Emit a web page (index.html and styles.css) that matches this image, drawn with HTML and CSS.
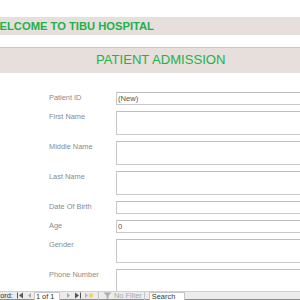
FILE: index.html
```html
<!DOCTYPE html>
<html>
<head>
<meta charset="utf-8">
<link rel="stylesheet" href="styles.css">
</head>
<body>
<div class="page">
  <div class="banner-top"><span class="welcome">WELCOME TO TIBU HOSPITAL</span></div>
  <div class="banner-title"><span class="title">PATIENT ADMISSION</span></div>
  <div class="form">
    <div class="row"><label>Patient ID</label><div class="box short">(New)</div></div>
    <div class="row"><label>First Name</label><div class="box tall"></div></div>
    <div class="row"><label>Middle Name</label><div class="box tall"></div></div>
    <div class="row"><label>Last Name</label><div class="box tall"></div></div>
    <div class="row"><label>Date Of Birth</label><div class="box short"></div></div>
    <div class="row"><label>Age</label><div class="box short">0</div></div>
    <div class="row"><label>Gender</label><div class="box tall"></div></div>
    <div class="row"><label>Phone Number</label><div class="box tall"></div></div>
  </div>
</div>
<div class="navbar">
  <span class="rec">Record:</span>
  <svg class="nav-ic" width="8" height="7" viewBox="0 0 8 7"><rect x="1" y="0.5" width="1" height="6" fill="#555"/><path d="M7 0.5 L3 3.5 L7 6.5 Z" fill="#555"/></svg>
  <svg class="nav-ic" width="6" height="7" viewBox="0 0 6 7"><path d="M5 1 L2 3.5 L5 6 Z" fill="#aaa"/></svg>
  <span class="pos">1 of 1</span>
  <svg class="nav-ic" width="7" height="7" viewBox="0 0 7 7"><path d="M2 1 L5 3.5 L2 6 Z" fill="#aaa"/></svg>
  <svg class="nav-ic" width="8" height="7" viewBox="0 0 8 7"><path d="M1 0.5 L5 3.5 L1 6.5 Z" fill="#555"/><rect x="6" y="0.5" width="1" height="6" fill="#555"/></svg>
  <svg class="nav-ic" width="10" height="7" viewBox="0 0 10 7"><path d="M1 0.5 L4 3.5 L1 6.5 Z" fill="#bbb"/><circle cx="7" cy="3.5" r="2.2" fill="#f2d36b"/></svg>
  <span class="sep"></span>
  <svg class="nav-ic" width="9" height="7" viewBox="0 0 9 7"><path d="M0.5 0.5 H8.5 L5.5 3.5 V6.5 H3.5 V3.5 Z" fill="#aaa"/></svg>
  <span class="nofilter">No Filter</span>
  <span class="sep"></span>
  <span class="search">Search</span>
</div>
</body>
</html>
```
FILE: styles.css
```css
html, body {
  margin: 0;
  padding: 0;
  background: #ffffff;
  overflow: hidden;
  width: 300px;
  height: 300px;
}
body {
  font-family: "Liberation Sans", Arial, sans-serif;
  position: relative;
}
.page {
  padding-top: 17px;
}
.banner-top {
  height: 18px;
  background: #e6dfdc;
  display: flex;
  align-items: center;
  overflow: hidden;
}
.welcome {
  margin-left: -11px;
  color: #20b24b;
  font-weight: bold;
  font-size: 11.2px;
  white-space: nowrap;
}
.banner-title {
  margin-top: 12px;
  height: 25px;
  border-top: 1px solid #cbc4c0;
  background: #e6dfdc;
  display: flex;
  align-items: center;
}
.title {
  padding-left: 96px;
  padding-bottom: 3px;
  color: #20b24b;
  font-size: 13.1px;
  white-space: nowrap;
}
.form {
  margin-top: 19px;
  display: flex;
  flex-direction: column;
  gap: 6px;
  width: 400px;
}
.row {
  display: flex;
  align-items: flex-start;
}
.row label {
  flex: none;
  width: 67px;
  margin-left: 49px;
  font-size: 7.4px;
  line-height: 11px;
  color: #8a8a8a;
  white-space: nowrap;
}
.box {
  width: 220px;
  flex: none;
  box-sizing: border-box;
  border: 1px solid #c9c9c9;
  border-top-color: #bdbdbd;
  background: #fff;
  font-size: 7.6px;
  color: #555;
  padding-left: 1px;
  line-height: 11px;
}
.box.short { height: 13px; }
.box.tall { height: 24px; }
.navbar {
  position: absolute;
  left: 0;
  bottom: 0;
  width: 300px;
  height: 9px;
  box-sizing: border-box;
  background: #ececec;
  border-top: 1px solid #d0d0d0;
  border-bottom: 1px solid #8c8c8c;
  display: flex;
  align-items: center;
  font-size: 7.4px;
  color: #333;
  white-space: nowrap;
}
.rec {
  margin-left: -13px;
  margin-right: 3px;
}
.nav-ic {
  flex: none;
  margin-right: 2px;
}
.pos {
  background: #fff;
  border: 1px solid #c6c6c6;
  width: 26px;
  height: 9px;
  box-sizing: border-box;
  line-height: 8px;
  padding-left: 1px;
  margin-right: 5px;
  margin-top: 1px;
}
.sep {
  width: 1px;
  height: 8px;
  background: #c6c6c6;
  margin: 0 4px 0 2px;
}
.nofilter {
  color: #aaa;
}
.search {
  background: #fff;
  border: 1px solid #c6c6c6;
  width: 36px;
  height: 9px;
  box-sizing: border-box;
  line-height: 8px;
  padding-left: 2px;
  margin-top: 1px;
}
```
